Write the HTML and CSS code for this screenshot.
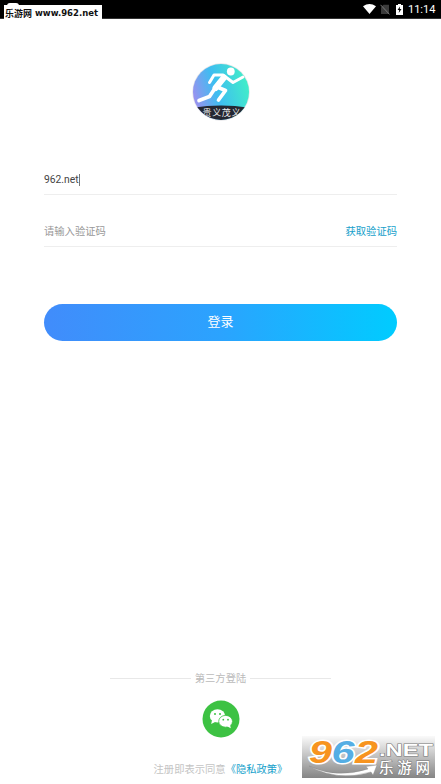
FILE: index.html
```html
<!DOCTYPE html>
<html lang="zh-CN">
<head>
<meta charset="utf-8">
<title>登录</title>
<link rel="stylesheet" href="styles.css">
</head>
<body>
<header class="status">
  <svg class="wifi" width="13" height="10" viewBox="0 0 13 10"><path d="M0 2.300Q6.500-2.300 13 2.300L6.500 10Z" fill="#fff"/></svg>
  <svg class="sim" width="10" height="11" viewBox="0 0 10 11"><path d="M3.500 .8H9V10H1V3.200Z" fill="#3b3b3b"/><path d="M.5.8L9.500 10.400" stroke="#777" stroke-width="1"/></svg>
  <svg class="battery" width="7" height="11" viewBox="0 0 7 11"><path d="M2 0H5V1H7V11H0V1H2Z" fill="#fff"/><path d="M4 2.500L1.500 6H3.200L2.700 9L5.500 5H3.800Z" fill="#000"/></svg>
  <span class="clock">11:14</span>
</header>
<div class="site-tag"><svg class="site-text" width="98" height="15" viewBox="0 0 98 15"><text x="1" y="11.500" font-size="9" textLength="27" lengthAdjust="spacingAndGlyphs">乐游网</text><text class="latin" x="31" y="11.300" font-size="9" textLength="63" lengthAdjust="spacingAndGlyphs">www.962.net</text></svg></div>
<main class="login">
  <svg class="logo" width="60" height="60" viewBox="0 0 60 60">
    <defs>
      <linearGradient id="sky" x1="0" y1=".65" x2="1" y2=".35"><stop offset="0" stop-color="#a78bef"/><stop offset=".43" stop-color="#3ebdf1"/><stop offset="1" stop-color="#42f2c5"/></linearGradient>
      <clipPath id="disc"><circle cx="30" cy="30" r="28"/></clipPath>
    </defs>
    <circle cx="30" cy="30" r="28.700" fill="#e5e5e8"/>
    <g clip-path="url(#disc)">
      <path d="M0 0H60V60H0Z" fill="url(#sky)"/>
      <circle cx="39.800" cy="9.500" r="3.900" fill="#fff"/>
      <g fill="none" stroke="#fff" stroke-linecap="round" stroke-linejoin="round">
        <path d="M18.500 20.500L23 13H32L42 20.500L52 15" stroke-width="3"/>
        <path d="M33 15.500L24.500 26" stroke-width="6"/>
        <path d="M25 24.500L34.500 28.500L27.500 38" stroke-width="3.700"/>
        <path d="M23.500 27L18.500 34.500L8 38.500" stroke-width="3.700"/>
      </g>
      <path d="M0 46Q30 41 60 46V60H0Z" fill="#242732"/>
      <text x="11.500" y="53.800" font-size="9" fill="#eee" textLength="38">贵义茂义</text>
    </g>
  </svg>
  <div class="field"><span class="value">962.net</span><i class="caret"></i></div>
  <div class="field code"><span class="hint">请输入验证码</span><a class="get-code">获取验证码</a></div>
  <button class="submit">登录</button>
</main>
<footer class="third">
  <div class="divider"><span>第三方登陆</span></div>
  <svg class="wechat" width="38" height="38" viewBox="0 0 38 38">
    <circle cx="19" cy="19" r="18.500" fill="#3dc243"/>
    <ellipse cx="15.500" cy="15.900" rx="7.700" ry="6.600" fill="#fff"/><path d="M10 20L9.200 24L14 21.500Z" fill="#fff"/>
    <circle cx="13" cy="14" r="1" fill="#3dc243"/><circle cx="18" cy="14" r="1" fill="#3dc243"/>
    <ellipse cx="23.600" cy="21.300" rx="6.900" ry="5.900" fill="#fff" stroke="#3dc243" stroke-width=".8"/><path d="M24.500 26L28.800 28.200L28 24.500Z" fill="#fff"/>
    <circle cx="21.300" cy="19.700" r=".9" fill="#3dc243"/><circle cx="26" cy="19.700" r=".9" fill="#3dc243"/>
  </svg>
  <p class="terms">注册即表示同意<a>《隐私政策》</a></p>
</footer>
<svg class="brand" width="133" height="42" viewBox="0 0 133 42">
  <defs><linearGradient id="shade" x1="0" y1="0" x2="0" y2="1"><stop offset="0" stop-color="#fafafa"/><stop offset="1" stop-color="#858585"/></linearGradient></defs>
  <path d="M0 0H133V42H0Z" fill="url(#shade)"/>
  <path d="M7 30Q34 43 66 33L64 30.500L75 29L71 39L69 36Q35 46 7 30Z" fill="#fff" stroke="#888" stroke-width=".4"/>
  <g class="digits" stroke="#fff" stroke-width="3" paint-order="stroke" font-size="32">
    <text x="7" y="26.500" fill="#f7941f" textLength="23" lengthAdjust="spacingAndGlyphs">9</text>
    <text x="29.500" y="26.500" fill="#55aee4" textLength="23" lengthAdjust="spacingAndGlyphs">6</text>
    <text x="53" y="26.500" fill="#f7941f" textLength="23" lengthAdjust="spacingAndGlyphs">2</text>
  </g>
  <g fill="#fff" stroke="#777" stroke-width="1" paint-order="stroke">
    <text class="net" x="77" y="19.500" font-size="17" textLength="54" lengthAdjust="spacingAndGlyphs">.NET</text>
    <text class="name" x="77" y="37" font-size="14.500" textLength="51">乐游网</text>
  </g>
</svg>
</body>
</html>
```
FILE: styles.css
```css
* { box-sizing: border-box; }
body {
  margin: 0;
  height: 784px;
  position: relative;
  display: flex;
  flex-direction: column;
  overflow: hidden;
  background: #fff;
  color: #444;
  font-family: Roboto, "Noto Sans CJK SC", sans-serif;
  font-size: 10.300px;
}
.status {
  height: 19px;
  flex: none;
  display: flex;
  align-items: center;
  justify-content: flex-end;
  padding-right: 6px;
  background: #000;
  border-bottom: 1px solid #333;
}
.sim { margin-left: 4px; }
.battery { margin-left: 6px; }
.clock {
  margin-left: 5px;
  width: 27px;
  padding-top: 1px;
  color: #fff;
  font-size: 11px;
  line-height: 18px;
  white-space: nowrap;
}
.site-tag {
  position: absolute;
  left: 4px;
  top: 5px;
  width: 98px;
  height: 15px;
  background: #fff;
}
.site-tag::before {
  content: "";
  position: absolute;
  left: 3px;
  top: -2px;
  width: 12px;
  height: 3px;
  border-radius: 3px 3px 0 0;
  background: #fff;
}
.site-text { display: block; position: relative; font-weight: 700; fill: #111; }
.latin { font-family: "DejaVu Sans", sans-serif; }
.login {
  flex: 1;
  display: flex;
  flex-direction: column;
  padding: 43px 44px 0;
}
.logo { align-self: center; flex: none; }
.field {
  display: flex;
  align-items: center;
  height: 30px;
  margin-top: 43px;
  border-bottom: 1px solid #eee;
}
.code { margin-top: 22px; padding-bottom: 2px; }
.value { color: #444; }
.caret { width: 1px; height: 12px; background: #777; }
.hint { color: #999; }
.get-code { margin-left: auto; color: #169fcb; }
.submit {
  height: 37px;
  flex: none;
  margin-top: 57px;
  padding: 0 0 4px;
  border: 0;
  border-radius: 19px;
  background: linear-gradient(90deg, #418cfb, #2ba3fe 50%, #00ccff);
  color: #fff;
  font: 13px "Noto Sans CJK SC", sans-serif;
}
.third {
  display: flex;
  flex-direction: column;
  align-items: center;
  height: 114px;
  flex: none;
}
.divider {
  display: flex;
  align-items: center;
  gap: 4px;
  width: 221px;
  height: 16px;
  color: #bbb;
}
.divider span { padding-bottom: 1px; }
.divider::before, .divider::after { content: ""; flex: 1; height: 1px; background: #e8e8e8; }
.wechat { margin-top: 14px; flex: none; }
.terms { margin: 24px 0 0; line-height: 16px; color: #c4c4c4; white-space: nowrap; }
.terms a { color: #169fcb; }
.brand { position: absolute; left: 302px; top: 736px; font-family: "Noto Sans CJK SC", sans-serif; font-weight: 700; overflow: visible; }
.digits { font-family: "Liberation Sans", sans-serif; font-style: italic; }
.net { font-family: "Liberation Sans", sans-serif; }
.name { font-weight: 500; }
```
